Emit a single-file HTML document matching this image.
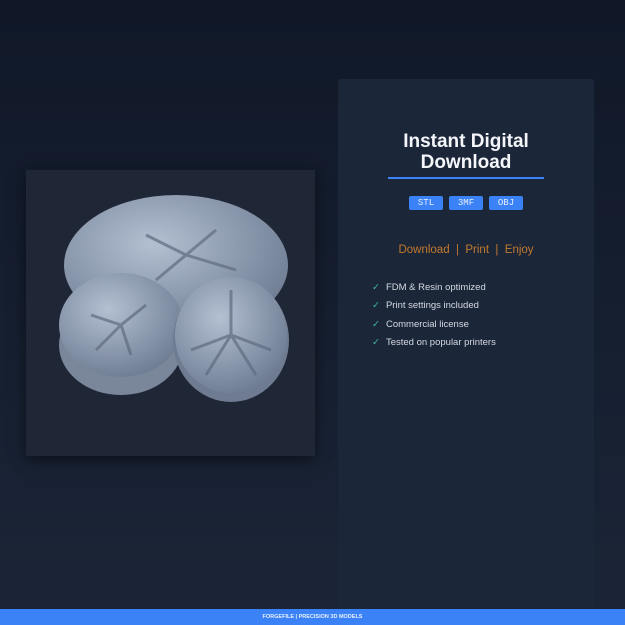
<!DOCTYPE html>
<html><head><style>
*{margin:0;padding:0;box-sizing:border-box}
body{width:625px;height:625px;overflow:hidden;background:linear-gradient(#101828,#1b2537);font-family:"Liberation Sans",sans-serif;position:relative}
.img{position:absolute;left:26px;top:170px;width:289px;height:286px;background:#1f2636;box-shadow:0 4px 14px rgba(0,0,0,.5)}
.panel{position:absolute;left:338px;top:79px;width:256px;height:530px;background:#1c2639;border-radius:3px}
h1{position:absolute;left:0;width:256px;top:52px;text-align:center;color:#f4f6fa;font-size:19px;line-height:21px;font-weight:bold}
.line{position:absolute;left:50px;top:98px;width:156px;height:2px;background:#3b82f6}
.tags{position:absolute;top:117px;left:0;width:256px;text-align:center;font-size:0}
.tags span{display:inline-block;width:34px;height:14px;margin:0 3px;background:#3b82f6;color:#e8f0ff;font-family:"Liberation Mono",monospace;font-size:9px;line-height:14px;border-radius:2px}
.dpe{position:absolute;top:165px;left:0;width:256px;text-align:center;color:#c27a2c;font-size:11.5px}
ul{position:absolute;left:34px;top:203px;list-style:none;color:#d5dae3;font-size:9.5px}
li{height:18.3px}
li b{color:#3fb8a8;font-weight:normal;margin-right:6px}
.foot{position:absolute;left:0;top:609px;width:625px;height:16px;background:#3b82f6;color:#e8f0ff;font-size:5.5px;font-weight:bold;text-align:center;line-height:16px}
</style></head><body>
<div class="img">
<svg width="289" height="286" viewBox="0 0 289 286">
<defs><radialGradient id="g" cx="40%" cy="35%" r="70%"><stop offset="0" stop-color="#b3c0d2"/><stop offset="1" stop-color="#6d7b92"/></radialGradient></defs>
<ellipse cx="150" cy="95" rx="112" ry="70" fill="url(#g)"/>
<ellipse cx="95" cy="175" rx="62" ry="50" fill="#7a879b"/>
<ellipse cx="95" cy="155" rx="62" ry="52" fill="url(#g)"/>
<ellipse cx="205" cy="170" rx="58" ry="62" fill="#6e7b90"/>
<ellipse cx="205" cy="165" rx="56" ry="58" fill="url(#g)"/>
<g stroke="#5e6b80" stroke-width="3" fill="none" opacity=".7">
<path d="M205 165l0-45M205 165l40 15M205 165l-40 15M205 165l25 40M205 165l-25 40"/>
<path d="M95 155l-30-10M95 155l25-20M95 155l10 30M95 155l-25 25"/>
<path d="M160 85l-40-20M160 85l30-25M160 85l50 15M160 85l-30 25"/>
</g>
</svg>
</div>
<div class="panel">
<h1>Instant Digital<br>Download</h1>
<div class="line"></div>
<div class="tags"><span>STL</span><span>3MF</span><span>OBJ</span></div>
<div class="dpe">Download &nbsp;|&nbsp; Print &nbsp;|&nbsp; Enjoy</div>
<ul><li><b>✓</b>FDM &amp; Resin optimized</li><li><b>✓</b>Print settings included</li><li><b>✓</b>Commercial license</li><li><b>✓</b>Tested on popular printers</li></ul>
</div>
<div class="foot">FORGEFILE | PRECISION 3D MODELS</div>
</body></html>
